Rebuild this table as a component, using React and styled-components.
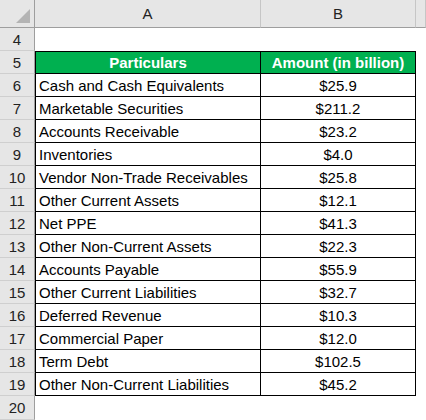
import React from "react";
import styled, { createGlobalStyle } from "styled-components";

const rows = [
  ["Cash and Cash Equivalents", "$25.9"],
  ["Marketable Securities", "$211.2"],
  ["Accounts Receivable", "$23.2"],
  ["Inventories", "$4.0"],
  ["Vendor Non-Trade Receivables", "$25.8"],
  ["Other Current Assets", "$12.1"],
  ["Net PPE", "$41.3"],
  ["Other Non-Current Assets", "$22.3"],
  ["Accounts Payable", "$55.9"],
  ["Other Current Liabilities", "$32.7"],
  ["Deferred Revenue", "$10.3"],
  ["Commercial Paper", "$12.0"],
  ["Term Debt", "$102.5"],
  ["Other Non-Current Liabilities", "$45.2"],
];

const GlobalStyle = createGlobalStyle`
  body {
    margin: 0;
    background: #fff;
    font-family: "Liberation Sans", Arial, sans-serif;
  }
`;

const Sheet = styled.div`
  display: grid;
  grid-template-columns: 35px 226px 155px 1fr;
  grid-template-rows: 28px repeat(16, 23px);
  width: 426px;
  height: 420px;
  overflow: hidden;
  color: #000;
`;

const ColHead = styled.div`
  background: #e6e6e6;
  border-bottom: 1px solid #9e9e9e;
  border-right: 1px solid #c6c6c6;
  display: flex;
  align-items: center;
  justify-content: center;
  font-size: 15px;
  color: #222;
  box-sizing: border-box;
`;

const Corner = styled(ColHead)`
  position: relative;
  border-right: 1px solid #9e9e9e;
`;

const Triangle = styled.div`
  position: absolute;
  right: 4px;
  bottom: 4px;
  width: 0;
  height: 0;
  border-left: 14px solid transparent;
  border-bottom: 14px solid #b4b4b4;
`;

const RowNum = styled.div`
  background: #e6e6e6;
  border-right: 1px solid #9e9e9e;
  border-bottom: 1px solid #cfcfcf;
  display: flex;
  align-items: center;
  justify-content: center;
  font-size: 15px;
  color: #222;
  box-sizing: border-box;
`;

const Blank = styled.div`
  background: #fff;
`;

const Cell = styled.div`
  box-sizing: border-box;
  display: flex;
  align-items: center;
  justify-content: ${(p) => (p.$center ? "center" : "flex-start")};
  padding-left: ${(p) => (p.$center ? "0" : "3px")};
  border-bottom: 1px solid #000;
  border-left: ${(p) => (p.$first ? "1px solid #000" : "none")};
  border-right: 1px solid #000;
  border-top: ${(p) => (p.$top ? "1px solid #000" : "none")};
  white-space: nowrap;
  overflow: hidden;
  font-size: 15px;
`;

const HeadCell = styled(Cell)`
  background: #00b050;
  color: #fff;
  font-weight: bold;
  justify-content: center;
  padding-left: 0;
`;

export default function App() {
  return (
    <>
      <GlobalStyle />
      <Sheet>
        <Corner>
          <Triangle />
        </Corner>
        <ColHead>A</ColHead>
        <ColHead>B</ColHead>
        <ColHead />

        <RowNum>4</RowNum>
        <Blank />
        <Blank />
        <Blank />

        <RowNum>5</RowNum>
        <HeadCell $first $top>Particulars</HeadCell>
        <HeadCell $top>Amount (in billion)</HeadCell>
        <Blank />

        {rows.map(([label, amount], i) => (
          <React.Fragment key={label}>
            <RowNum>{i + 6}</RowNum>
            <Cell $first>{label}</Cell>
            <Cell $center>{amount}</Cell>
            <Blank />
          </React.Fragment>
        ))}

        <RowNum>20</RowNum>
        <Blank />
        <Blank />
        <Blank />
      </Sheet>
    </>
  );
}
